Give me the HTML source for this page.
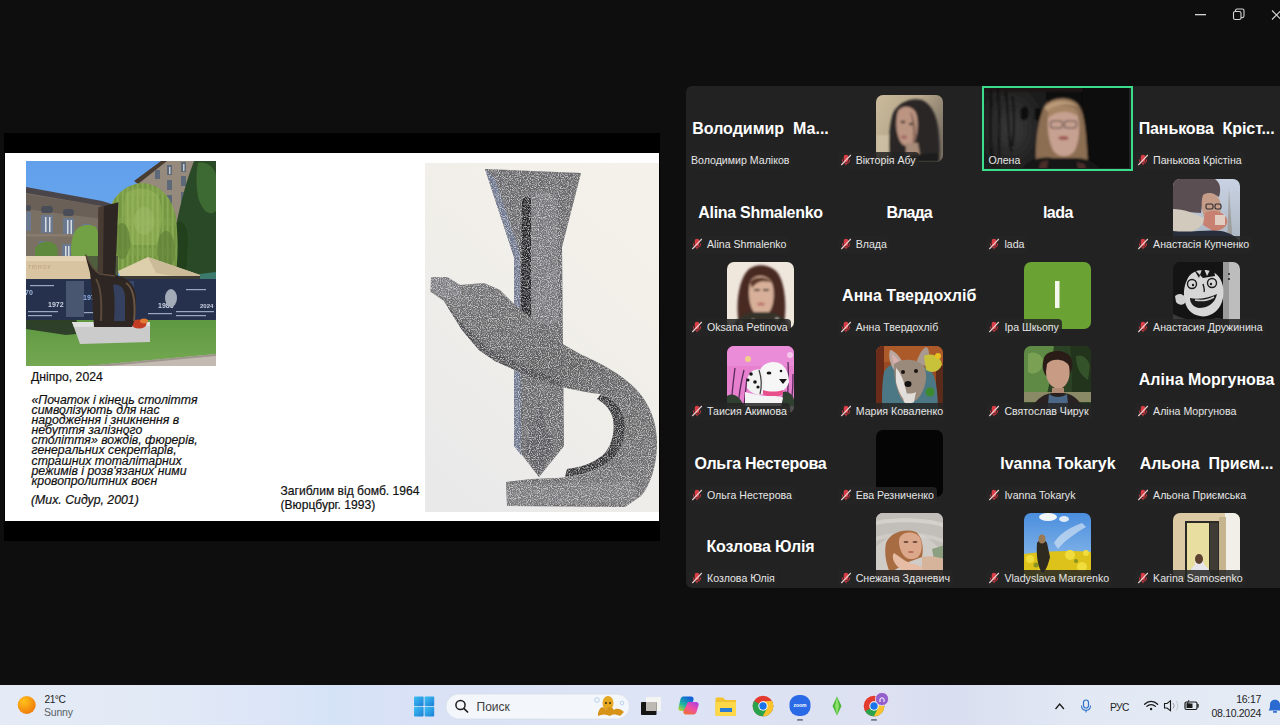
<!DOCTYPE html>
<html><head><meta charset="utf-8">
<style>
*{box-sizing:border-box;margin:0;padding:0}
html,body{width:1280px;height:725px;overflow:hidden;background:#0e0e0e;font-family:"Liberation Sans",sans-serif}
.abs{position:absolute}
#slideframe{position:absolute;left:4px;top:133px;width:656px;height:408px;background:#000}
#slide{position:absolute;left:5px;top:153px;width:654px;height:368px;background:#fff;overflow:hidden}
#panel{position:absolute;left:686px;top:86px;width:610px;height:502px;background:#222222;border-radius:6px}
.tile{position:absolute;width:149px;height:84px}
.big{position:absolute;left:0;right:0;top:34px;text-align:center;color:#fff;font-weight:bold;font-size:16px;line-height:18px;white-space:nowrap}
.av{position:absolute;left:41px;top:9px;width:67px;height:67px;border-radius:7px;overflow:hidden}
.lab{position:absolute;left:3px;top:66px;height:17px;border-radius:4px;background:rgba(36,36,36,0.85);color:#e6e6e6;font-size:10.6px;line-height:17px;white-space:nowrap;padding:0 3px 0 2px}
.vid{position:absolute;left:-1px;top:-0.5px;width:150.6px;height:85.6px;border:2.5px solid #3bdc8c;overflow:hidden}
.vid svg{display:block;width:145px;height:80px}
.vlab{position:absolute;left:3px;top:66px;height:17px;color:#e6e6e6;font-size:10.6px;line-height:17px;white-space:nowrap;padding:0 3px 0 2px}
.lab .mic{display:inline-block;width:12px;height:12px;vertical-align:-2px;margin:0 4px 0 0}
#taskbar{position:absolute;left:0;top:685px;width:1280px;height:40px;background:linear-gradient(90deg,#e4ebf6 0px,#e2eaf6 150px,#dce5f8 280px,#d5e3f7 330px,#d9e1f6 400px,#dde4f5 640px,#dde1f2 880px,#d9def0 950px,#e2e9f4 1080px,#e4ebf5 1280px)}
</style></head><body>

<!-- window controls -->
<svg class="abs" style="left:1180px;top:0" width="100" height="30">
  <rect x="15" y="14" width="11" height="1.3" fill="#d4d4d4"/>
  <g fill="none" stroke="#d4d4d4" stroke-width="1.1">
    <rect x="53.5" y="11.5" width="7.5" height="8" rx="1.6"/>
    <path d="M55.5 11.3 V10.6 a1.6 1.6 0 0 1 1.6 -1.6 H62.4 a1.6 1.6 0 0 1 1.6 1.6 V16 a1.6 1.6 0 0 1 -1.6 1.6 H61.2"/>
    <path d="M92 10.5 L101 19.5 M101 10.5 L92 19.5"/>
  </g>
</svg>

<div id="slideframe"></div>
<div id="slide"><svg class="abs" style="left:21px;top:8px" width="190" height="205" viewBox="0 0 190 205">
<defs>
<linearGradient id="dsky" x1="0" y1="0" x2="0" y2="1"><stop offset="0" stop-color="#62a0ec"/><stop offset="1" stop-color="#7ab2f0"/></linearGradient>
<linearGradient id="dgrass" x1="0" y1="0" x2="0" y2="1"><stop offset="0" stop-color="#5e9840"/><stop offset="1" stop-color="#74a852"/></linearGradient>
<pattern id="willow" width="5" height="30" patternUnits="userSpaceOnUse"><rect width="5" height="30" fill="#7c9e48"/><rect x="1" width="1.5" height="30" fill="#a4c26a" opacity="0.35"/><rect x="3.5" y="5" width="1" height="22" fill="#56772f" opacity="0.35"/></pattern>
<filter id="dbl" x="0" y="0" width="100%" height="100%"><feGaussianBlur stdDeviation="0.6"/></filter>
</defs>
<g filter="url(#dbl)">
<rect width="190" height="205" fill="url(#dsky)"/>
<!-- left building -->
<polygon points="0,27 76,41 92,46 92,100 0,100" fill="#7a6f64"/>
<polygon points="0,33 76,45 92,50 92,60 0,48" fill="#6a6058"/>
<polygon points="0,26 76,40 92,45 92,49 76,45 0,32" fill="#48444a"/>
<g fill="#4a4e58">
<rect x="0" y="44" width="5" height="6" rx="2"/><rect x="15" y="45" width="12" height="7" rx="3"/><rect x="37" y="48" width="11" height="7" rx="3"/>
</g>
<g fill="#6a7890">
<rect x="0" y="51" width="5" height="19"/><rect x="15" y="54" width="12" height="18"/><rect x="37" y="57" width="11" height="17"/><rect x="56" y="63" width="8" height="12"/>
<rect x="13" y="80" width="8" height="9"/><rect x="36" y="83" width="9" height="13"/>
</g>
<g fill="#d8dde4"><rect x="19" y="56" width="1.5" height="15"/><rect x="23" y="56" width="1.5" height="15"/><rect x="41" y="59" width="1.5" height="14"/><rect x="44.5" y="59" width="1.5" height="14"/><rect x="39" y="85" width="1.5" height="10"/><rect x="42" y="85" width="1.5" height="10"/></g>
<rect x="0" y="73" width="92" height="2.5" fill="#887c70"/>
<!-- tall building right -->
<polygon points="111,20 137,0 172,0 172,95 113,95" fill="#958a7c"/>
<polygon points="108,20 135,0 141,0 112,23" fill="#4a3d33"/>
<g fill="#5d6878">
<rect x="129" y="9" width="5" height="9"/><rect x="141" y="4" width="5" height="10"/><rect x="155" y="1" width="5" height="10"/>
<rect x="141" y="19" width="5" height="10"/><rect x="155" y="15" width="5" height="10"/>
<rect x="141" y="34" width="5" height="10"/><rect x="155" y="31" width="5" height="11"/>
</g>
<g fill="#c0c8d0"><rect x="143" y="6" width="1.5" height="7"/><rect x="157" y="3" width="1.5" height="7"/><rect x="157" y="33" width="1.5" height="8"/></g>
<!-- dark trees right -->
<path d="M168 0 H190 V125 H146 C145 100 148 80 151 60 C155 40 161 18 168 0Z" fill="#2c4a26"/>
<path d="M172 2 C180 0 188 6 190 14 V50 C184 56 176 50 172 36 C170 24 170 12 172 2Z" fill="#3d6a31"/>
<path d="M150 62 C156 58 162 64 162 80 L160 118 H146Z" fill="#22401e"/>
<!-- willow -->
<path d="M86 42 C92 30 104 22 118 22 C134 24 146 36 150 56 C152 76 152 96 150 112 H88 C84 90 82 62 86 42Z" fill="url(#willow)"/>
<path d="M100 32 C110 26 122 26 132 34 C138 50 136 68 130 84 H106 C98 66 96 48 100 32Z" fill="#9dbb62" opacity="0.45"/>
<ellipse cx="96" cy="80" rx="8" ry="18" fill="#5d7d36" opacity="0.6"/>
<ellipse cx="140" cy="90" rx="9" ry="20" fill="#5a7a34" opacity="0.55"/>
<ellipse cx="118" cy="60" rx="10" ry="14" fill="#a8c470" opacity="0.35"/>
<path d="M48 72 C52 64 62 62 70 66 C74 74 74 88 72 98 H46 C44 88 45 80 48 72Z" fill="#72a044"/>
<path d="M9 88 C13 80 23 78 30 84 C32 88 32 94 31 98 H9Z" fill="#5e8a3c"/>
<rect x="55" y="95" width="37" height="24" fill="#4f5e3e"/>
<!-- tent left -->
<polygon points="0,95 60,95 72,118 0,118" fill="#d8c4a0"/>
<polygon points="0,95 60,95 62,100 0,100" fill="#e3d3b4"/>
<text x="2" y="108" font-family="Liberation Sans" font-size="5" fill="#b89f7c" letter-spacing="1">ТЮНОУ</text>
<!-- umbrella -->
<polygon points="92,110 122,96 180,116 176,120 94,115" fill="#ddcfac"/>
<polygon points="122,96 180,116 176,120 130,112" fill="#cbbb98"/>
<rect x="94" y="115" width="82" height="4" fill="#3d3a34"/>
<polygon points="174,113 190,111 190,121 174,121" fill="#3a7a6c"/>
<!-- banner -->
<rect x="0" y="118" width="190" height="42" fill="#28324e"/>
<rect x="40" y="120" width="18" height="36" fill="#4a5670"/>
<rect x="70" y="120" width="38" height="10" fill="#39476a"/>
<g fill="#c9d3e3" font-family="Liberation Sans" font-size="7" font-weight="bold">
<text x="-1" y="134" fill="#9fb6da">70</text><text x="22" y="146">1972</text><text x="57" y="139" fill="#8fb0e0">1976</text><text x="132" y="147">1986</text><text x="174" y="147" font-size="6">2024</text>
</g>
<g fill="#9aa8c0"><rect x="2" y="150" width="30" height="1.2"/><rect x="2" y="154" width="24" height="1.2"/><rect x="58" y="151" width="26" height="1.2"/><rect x="122" y="152" width="24" height="1.2"/><rect x="150" y="150" width="38" height="1.2"/><rect x="150" y="154" width="30" height="1.2"/><rect x="4" y="124" width="24" height="1.2"/><rect x="160" y="128" width="20" height="1.2"/></g>
<ellipse cx="145" cy="137" rx="6" ry="9" fill="#a3abb8"/>
<!-- grass -->
<rect x="0" y="159" width="190" height="46" fill="url(#dgrass)"/>
<polygon points="0,159 50,159 60,172 40,174 0,168" fill="#263024" opacity="0.85"/>
<polygon points="60,205 190,193 190,205" fill="#c3bbb1"/>
<polygon points="60,205 190,193 190,195 60,207" fill="#9e968c"/>
<!-- pedestal -->
<polygon points="46,161 124,161 124,181 54,183" fill="#cbcbcb"/>
<polygon points="46,161 124,161 124,165 48,166" fill="#e0e0e0"/>
<!-- flowers -->
<ellipse cx="113" cy="163" rx="7.5" ry="4.5" fill="#c23a22"/>
<ellipse cx="118" cy="160" rx="4" ry="2.5" fill="#e07a30"/>
<!-- sculpture -->
<polygon points="72.7,46.4 92.4,41.2 89.3,114 71.7,114" fill="#2e2520"/>
<polygon points="72.7,46.4 78,45 77,114 71.7,114" fill="#463a32"/>
<path d="M59 92 C62 100 67 108 73 112 L89 114 C98 116 106 120 109 130 C111 140 111 155 106 166 L68 166 C67 150 66 130 64 112 C62 104 60 98 59 92Z" fill="#2f2621"/>
<path d="M87 124 C94 122 99 128 99 136 L99 160 L88 160 C89 146 89 134 87 124Z" fill="#34405e"/>
<path d="M100 122 C107 126 110 140 108 160" fill="none" stroke="#6a5646" stroke-width="2"/>
<path d="M70 118 C74 124 76 140 75 160" fill="none" stroke="#5a4a3e" stroke-width="2"/>
<path d="M60 94 C64 104 68 110 74 113 L89 115" fill="none" stroke="#5c4a3e" stroke-width="1.4"/>
</g>
</svg>
<div class="abs" style="left:26px;top:217px;font-size:12.2px;line-height:14px;color:#111;-webkit-text-stroke:0.2px #111">Дніпро, 2024</div>
<div class="abs" style="left:26.5px;top:242px;font-size:12.3px;line-height:10.1px;font-style:italic;color:#111;white-space:nowrap;-webkit-text-stroke:0.2px #111">«Початок і кінець століття<br>символізують для нас<br>народження і зникнення в<br>небуття залізного<br>століття» вождів, фюрерів,<br>генеральних секретарів,<br>страшних тоталітарних<br>режимів і розв'язаних ними<br>кровопролитних воєн</div>
<div class="abs" style="left:26px;top:340px;font-size:12.3px;line-height:14px;font-style:italic;color:#111;-webkit-text-stroke:0.2px #111">(Мих. Сидур, 2001)</div>
<div class="abs" style="left:275.5px;top:331px;font-size:12.1px;line-height:14px;color:#111;white-space:nowrap;-webkit-text-stroke:0.2px #111">Загиблим від бомб. 1964<br>(Вюрцбург. 1993)</div>
<svg class="abs" style="left:420px;top:10px" width="234" height="349" viewBox="0 0 234 349">
<defs>
<linearGradient id="sbg" x1="0.8" y1="0" x2="0.2" y2="1"><stop offset="0" stop-color="#f4f1ea"/><stop offset="0.5" stop-color="#f0eee9"/><stop offset="1" stop-color="#e9e9ea"/></linearGradient>
<linearGradient id="bandg" x1="0" y1="0" x2="0.3" y2="1"><stop offset="0" stop-color="#747476"/><stop offset="0.5" stop-color="#5c5c5e"/><stop offset="1" stop-color="#6c6c6e"/></linearGradient>
<filter id="speck" x="0" y="0" width="100%" height="100%">
<feTurbulence type="fractalNoise" baseFrequency="1.1" numOctaves="1" seed="7" result="n"/>
<feColorMatrix in="n" type="matrix" values="0 0 0 0 1  0 0 0 0 1  0 0 0 0 1  0 0 0 -3 1.75" result="w"/>
<feComposite in="w" in2="SourceGraphic" operator="in"/>
</filter>
<filter id="speckd" x="0" y="0" width="100%" height="100%">
<feTurbulence type="fractalNoise" baseFrequency="1.0" numOctaves="1" seed="11" result="n"/>
<feColorMatrix in="n" type="matrix" values="0 0 0 0 0.15  0 0 0 0 0.15  0 0 0 0 0.15  0 0 0 -3 1.7" result="w"/>
<feComposite in="w" in2="SourceGraphic" operator="in"/>
</filter>
</defs>
<rect width="234" height="349" fill="url(#sbg)"/>
<g id="sculpt">
<path d="M60 6 L156 10 L137 84 L139 283 L114 314 L90 283 L89 94 Z" fill="#66666a"/>
<path d="M60 6 L89 94 L89 283 L96 292 L95 90 L70 16Z" fill="#6c7690"/>
<path d="M97 38 C99 32 106 32 106 38 L106 160 L96 160Z" fill="#1c1c20"/>
<path d="M106 36 C110 26 128 26 132 38 L134 160 L106 160Z" fill="#76767a"/>
<path d="M100 284 L114 314 L128 286 L114 240Z" fill="#58585c"/>
<path d="M6 114 L22 114 L35 122 L59 120 L75 127 L90 142 L111 159 L136 180 L155 191 C175 200 195 210 211 226 C224 240 232 258 232 280 C232 300 226 322 216 333 L200 344 L82 343 L81 319 L106 316 L132 315 C150 314 172 310 186 298 C198 286 202 270 199 255 C196 244 188 236 176 231 C164 230 150 227 137 224 L111 216 L90 207 L70 198 L54 187 L37 167 L19 138 L6 129 Z" fill="url(#bandg)"/>
<path d="M6 114 L22 114 L35 122 L37 133 L20 135 L5.5 129Z" fill="#7c7c82"/>
<path d="M19 138 C28 150 44 170 70 190 L90 199 L111 208 L137 216 L137 224 L111 216 L90 207 L70 198 L54 187 L37 167Z" fill="#4a4a4e"/>
<path d="M176 231 C188 236 196 244 199 255 C202 270 198 286 186 298 C176 306 160 312 140 314 L142 306 C160 304 172 298 180 290 C188 280 190 266 188 256 C186 248 182 242 172 236Z" fill="#2e2e32"/>
<path d="M82 321 L208 318 L214 330 L208 338 L82 343Z" fill="#78787c"/>
</g>
<g filter="url(#speck)" opacity="0.75"><use href="#sculpt"/></g>
<g filter="url(#speckd)" opacity="0.55"><use href="#sculpt"/></g>
</svg>
</div>

<div id="panel"></div>
<div class="tile" style="left:686.0px;top:86.0px"><div class="big">Володимир&nbsp; Ма...</div><div class="lab">Володимир Маліков</div></div>
<div class="tile" style="left:834.7px;top:86.0px"><div class="av"><svg width="67" height="67" viewBox="0 0 67 67"><defs><linearGradient id="vbg" x1="0" y1="0" x2="1" y2="0.6"><stop offset="0" stop-color="#cbbb9c"/><stop offset="0.5" stop-color="#b8a88c"/><stop offset="1" stop-color="#7a7064"/></linearGradient><filter id="vbl"><feGaussianBlur stdDeviation="1"/></filter></defs>
<rect width="67" height="67" fill="url(#vbg)"/>
<g filter="url(#vbl)">
<rect x="0" y="40" width="20" height="20" fill="#d2c4a8" opacity="0.7"/>
<path d="M14 67 C12 50 13 30 17 18 C22 8 34 2 46 5 C56 9 62 22 63 40 C64 52 64 62 63 67Z" fill="#2a2826"/>
<path d="M22 16 C26 10 36 10 40 18 C43 26 42 40 38 48 C34 53 27 52 24 46 C20 38 19 26 22 16Z" fill="#bc9482"/>
<path d="M34 16 C38 20 40 30 40 40 C40 46 38 50 36 50 C38 40 37 28 34 16Z" fill="#8a6a5c"/>
<ellipse cx="27" cy="27" rx="2.5" ry="1.3" fill="#3a2a24"/><ellipse cx="35" cy="29" rx="2" ry="1.2" fill="#3a2a24"/>
<path d="M30 48 L42 48 L44 60 L30 60Z" fill="#a88a78"/>
<ellipse cx="28" cy="42" rx="3" ry="1.6" fill="#a06060"/>
<path d="M12 67 C16 60 24 58 32 60 L62 58 V67Z" fill="#1e1c1c"/>
</g>
</svg>
</div><div class="lab m"><svg class="mic" viewBox="0 0 12 12" width="12" height="12"><rect x="3.7" y="0.8" width="4.6" height="7.6" rx="2.3" fill="#d83c44"/><path d="M2.3 5.4 v0.4 a3.7 3.7 0 0 0 7.4 0 v-0.4" fill="none" stroke="#c83840" stroke-width="1"/><rect x="5.5" y="9" width="1" height="2.2" fill="#c83840"/><path d="M1.3 11 L10.8 1" stroke="#ecd0d0" stroke-width="1.1"/></svg>Вікторія Абу</div></div>
<div class="tile" style="left:983.4px;top:86.0px"><div class="vid"><svg width="145" height="80" viewBox="1.5 2 145 80"><defs><radialGradient id="olg" cx="0.45" cy="0.5" r="0.6"><stop offset="0" stop-color="#3a3a3a"/><stop offset="1" stop-color="#1a1a1a"/></radialGradient><filter id="oblur" x="-10%" y="-10%" width="120%" height="120%"><feGaussianBlur stdDeviation="1.3"/></filter></defs>
<rect width="149" height="84" fill="#0e0e0e"/>
<g filter="url(#oblur)">
<rect x="0" y="0" width="64" height="84" fill="url(#olg)"/>
<rect x="0" y="0" width="149" height="6" fill="#1a1418"/>
<path d="M100 0 H149 V84 H100Z" fill="#0c0c0c"/>
<g stroke="#111" stroke-width="2" fill="none"><path d="M8 4 C10 30 6 50 10 74"/><path d="M15 2 C19 30 15 50 17 70"/><path d="M23 6 C27 30 25 50 29 66"/><path d="M30 10 C32 24 32 40 30 60"/></g>
<path d="M38 24 C42 18 46 20 46 28 C46 34 40 36 38 32Z" fill="#0c0c0c"/>
<path d="M52 24 C56 20 60 22 60 30 C58 36 54 36 52 32Z" fill="#111"/>
<path d="M54 82 C52 62 55 34 62 20 C68 10 88 9 96 18 C104 30 104 62 106 82Z" fill="#8c6e52"/>
<path d="M62 22 C68 13 88 12 95 21 C90 18 76 16 66 26Z" fill="#b89a78"/>
<path d="M66 28 C70 18 90 18 95 28 C98 40 97 56 92 65 C87 72 76 72 71 65 C66 56 64 40 66 28Z" fill="#c6a090"/>
<path d="M66 24 C72 18 88 18 94 24 L95 30 C86 24 74 24 66 32Z" fill="#a48464"/>
<g fill="none" stroke="#5a4a46" stroke-width="1.1"><rect x="68" y="35" width="12" height="7" rx="2.5"/><rect x="82" y="35" width="12" height="7" rx="2.5"/></g>
<ellipse cx="81" cy="52" rx="5" ry="2" fill="#a05a56"/>
<path d="M40 84 C44 74 58 70 70 72 H92 C104 72 114 76 118 84Z" fill="#161214"/>
<path d="M58 76 L66 74 L64 84 H56Z" fill="#4a2e2c"/>
<path d="M94 76 L102 78 L104 84 H96Z" fill="#4a2e2c"/>
</g>
</svg>
</div><div class="vlab">Олена</div></div>
<div class="tile" style="left:1132.1px;top:86.0px"><div class="big" style="letter-spacing:-0.09px">Панькова&nbsp; Кріст...</div><div class="lab m"><svg class="mic" viewBox="0 0 12 12" width="12" height="12"><rect x="3.7" y="0.8" width="4.6" height="7.6" rx="2.3" fill="#d83c44"/><path d="M2.3 5.4 v0.4 a3.7 3.7 0 0 0 7.4 0 v-0.4" fill="none" stroke="#c83840" stroke-width="1"/><rect x="5.5" y="9" width="1" height="2.2" fill="#c83840"/><path d="M1.3 11 L10.8 1" stroke="#ecd0d0" stroke-width="1.1"/></svg>Панькова Крістіна</div></div>
<div class="tile" style="left:686.0px;top:169.7px"><div class="big" style="letter-spacing:-0.3px">Alina Shmalenko</div><div class="lab m"><svg class="mic" viewBox="0 0 12 12" width="12" height="12"><rect x="3.7" y="0.8" width="4.6" height="7.6" rx="2.3" fill="#d83c44"/><path d="M2.3 5.4 v0.4 a3.7 3.7 0 0 0 7.4 0 v-0.4" fill="none" stroke="#c83840" stroke-width="1"/><rect x="5.5" y="9" width="1" height="2.2" fill="#c83840"/><path d="M1.3 11 L10.8 1" stroke="#ecd0d0" stroke-width="1.1"/></svg>Alina Shmalenko</div></div>
<div class="tile" style="left:834.7px;top:169.7px"><div class="big" style="letter-spacing:-0.9px">Влада</div><div class="lab m"><svg class="mic" viewBox="0 0 12 12" width="12" height="12"><rect x="3.7" y="0.8" width="4.6" height="7.6" rx="2.3" fill="#d83c44"/><path d="M2.3 5.4 v0.4 a3.7 3.7 0 0 0 7.4 0 v-0.4" fill="none" stroke="#c83840" stroke-width="1"/><rect x="5.5" y="9" width="1" height="2.2" fill="#c83840"/><path d="M1.3 11 L10.8 1" stroke="#ecd0d0" stroke-width="1.1"/></svg>Влада</div></div>
<div class="tile" style="left:983.4px;top:169.7px"><div class="big" style="letter-spacing:-0.5px">lada</div><div class="lab m"><svg class="mic" viewBox="0 0 12 12" width="12" height="12"><rect x="3.7" y="0.8" width="4.6" height="7.6" rx="2.3" fill="#d83c44"/><path d="M2.3 5.4 v0.4 a3.7 3.7 0 0 0 7.4 0 v-0.4" fill="none" stroke="#c83840" stroke-width="1"/><rect x="5.5" y="9" width="1" height="2.2" fill="#c83840"/><path d="M1.3 11 L10.8 1" stroke="#ecd0d0" stroke-width="1.1"/></svg>lada</div></div>
<div class="tile" style="left:1132.1px;top:169.7px"><div class="av"><svg width="67" height="67" viewBox="0 0 67 67"><defs><linearGradient id="kbg" x1="0" y1="0" x2="0" y2="1"><stop offset="0" stop-color="#c8d2e2"/><stop offset="1" stop-color="#aab4c0"/></linearGradient></defs>
<rect width="67" height="67" fill="url(#kbg)"/>
<path d="M56 10 L60 67 H54Z" fill="#8a8070" opacity="0.5"/>
<path d="M0 0 H42 C48 4 48 12 46 18 C40 14 34 14 30 18 L28 34 L0 32Z" fill="#5a4e52"/>
<path d="M30 16 C36 12 44 14 47 22 C49 30 47 38 43 42 L32 40 C28 32 28 22 30 16Z" fill="#c49c88"/>
<g fill="none" stroke="#2a2a2e" stroke-width="1.1"><rect x="33" y="25" width="7" height="5" rx="1.5"/><rect x="42" y="25" width="6" height="5" rx="1.5"/></g>
<path d="M0 30 C10 30 22 34 32 40 C28 50 18 56 0 54Z" fill="#d2cbbd"/>
<path d="M32 34 C40 30 50 32 54 40 C56 46 50 52 40 52 L30 46Z" fill="#c88070"/>
<path d="M42 36 H52 V46 H42Z" fill="#e8e0d8" opacity="0.8"/>
<path d="M0 52 C18 54 34 50 48 52 C58 54 64 58 67 64 V67 H0Z" fill="#282e3c"/>
</svg>
</div><div class="lab m"><svg class="mic" viewBox="0 0 12 12" width="12" height="12"><rect x="3.7" y="0.8" width="4.6" height="7.6" rx="2.3" fill="#d83c44"/><path d="M2.3 5.4 v0.4 a3.7 3.7 0 0 0 7.4 0 v-0.4" fill="none" stroke="#c83840" stroke-width="1"/><rect x="5.5" y="9" width="1" height="2.2" fill="#c83840"/><path d="M1.3 11 L10.8 1" stroke="#ecd0d0" stroke-width="1.1"/></svg>Анастасія Купченко</div></div>
<div class="tile" style="left:686.0px;top:253.3px"><div class="av"><svg width="67" height="67" viewBox="0 0 67 67"><defs><filter id="obl"><feGaussianBlur stdDeviation="0.9"/></filter></defs>
<rect width="67" height="67" fill="#efe6dc"/>
<g filter="url(#obl)">
<path d="M12 62 C8 42 12 16 22 7 C30 1 42 2 50 10 C58 20 60 44 57 62Z" fill="#4a2a20"/>
<path d="M23 20 C27 12 41 12 45 21 C48 30 47 42 43 49 C39 55 30 55 26 49 C22 42 21 30 23 20Z" fill="#d8b09a"/>
<path d="M23 20 C28 14 40 14 45 21 C40 18 30 18 25 26Z" fill="#5a3426"/>
<path d="M27 27 H33 V29 H27Z M36 27 H42 V29 H36Z" fill="#3a2620"/>
<ellipse cx="34" cy="42" rx="4" ry="1.6" fill="#b86e68"/>
<path d="M6 67 C8 56 18 50 28 50 H40 C50 50 60 56 62 67Z" fill="#34302c"/>
<g fill="#c8c0b4"><circle cx="14" cy="60" r="1.6"/><circle cx="20" cy="64" r="1.3"/><circle cx="50" cy="57" r="1.6"/><circle cx="56" cy="62" r="1.3"/><circle cx="44" cy="63" r="1.1"/><circle cx="26" cy="58" r="1"/></g>
</g>
</svg>
</div><div class="lab m"><svg class="mic" viewBox="0 0 12 12" width="12" height="12"><rect x="3.7" y="0.8" width="4.6" height="7.6" rx="2.3" fill="#d83c44"/><path d="M2.3 5.4 v0.4 a3.7 3.7 0 0 0 7.4 0 v-0.4" fill="none" stroke="#c83840" stroke-width="1"/><rect x="5.5" y="9" width="1" height="2.2" fill="#c83840"/><path d="M1.3 11 L10.8 1" stroke="#ecd0d0" stroke-width="1.1"/></svg>Oksana Petinova</div></div>
<div class="tile" style="left:834.7px;top:253.3px"><div class="big">Анна Твердохліб</div><div class="lab m"><svg class="mic" viewBox="0 0 12 12" width="12" height="12"><rect x="3.7" y="0.8" width="4.6" height="7.6" rx="2.3" fill="#d83c44"/><path d="M2.3 5.4 v0.4 a3.7 3.7 0 0 0 7.4 0 v-0.4" fill="none" stroke="#c83840" stroke-width="1"/><rect x="5.5" y="9" width="1" height="2.2" fill="#c83840"/><path d="M1.3 11 L10.8 1" stroke="#ecd0d0" stroke-width="1.1"/></svg>Анна Твердохліб</div></div>
<div class="tile" style="left:983.4px;top:253.3px"><div class="av"><svg width="67" height="67" viewBox="0 0 67 67">
<rect width="67" height="67" fill="#6aa234"/>
<rect x="31" y="19" width="4.5" height="27" fill="#f4f7ee"/>
</svg>
</div><div class="lab m"><svg class="mic" viewBox="0 0 12 12" width="12" height="12"><rect x="3.7" y="0.8" width="4.6" height="7.6" rx="2.3" fill="#d83c44"/><path d="M2.3 5.4 v0.4 a3.7 3.7 0 0 0 7.4 0 v-0.4" fill="none" stroke="#c83840" stroke-width="1"/><rect x="5.5" y="9" width="1" height="2.2" fill="#c83840"/><path d="M1.3 11 L10.8 1" stroke="#ecd0d0" stroke-width="1.1"/></svg>Іра Шкьопу</div></div>
<div class="tile" style="left:1132.1px;top:253.3px"><div class="av"><svg width="67" height="67" viewBox="0 0 67 67">
<rect width="67" height="67" fill="#141414"/>
<rect x="52" y="0" width="15" height="67" fill="#bdbdbd"/>
<path d="M50 0 H56 V67 H50Z" fill="#9a9a9a"/>
<path d="M14 18 C18 8 30 6 40 10 C48 14 52 24 50 36 C48 46 42 52 34 54 C24 56 14 50 12 40 C10 32 11 24 14 18Z" fill="#d6d6d6"/>
<path d="M20 6 L26 16 L30 4 L34 14 L40 2 L42 14 L30 16Z" fill="#141414"/>
<path d="M2 34 C6 30 12 32 13 38 C12 44 6 44 3 40Z" fill="#d0d0d0"/>
<g fill="none" stroke="#1a1a1a" stroke-width="1.4"><circle cx="19" cy="22" r="4.5"/><circle cx="39" cy="21" r="4.5"/><path d="M30 22 C31 26 32 28 31 30"/></g>
<circle cx="20" cy="23" r="1.2" fill="#1a1a1a"/><circle cx="38" cy="22" r="1.2" fill="#1a1a1a"/>
<path d="M17 36 C24 38 36 36 44 32 C42 42 34 46 26 46 C20 45 17 41 17 36Z" fill="#1a1a1a"/>
<path d="M22 38 C28 39 36 38 41 35" fill="none" stroke="#cfcfcf" stroke-width="1.6"/>
<path d="M0 52 C10 58 26 60 44 56 L56 58 V67 H0Z" fill="#3a3a3a"/>
<circle cx="56" cy="12" r="1" fill="#222"/><circle cx="56" cy="17" r="1" fill="#222"/>
</svg>
</div><div class="lab m"><svg class="mic" viewBox="0 0 12 12" width="12" height="12"><rect x="3.7" y="0.8" width="4.6" height="7.6" rx="2.3" fill="#d83c44"/><path d="M2.3 5.4 v0.4 a3.7 3.7 0 0 0 7.4 0 v-0.4" fill="none" stroke="#c83840" stroke-width="1"/><rect x="5.5" y="9" width="1" height="2.2" fill="#c83840"/><path d="M1.3 11 L10.8 1" stroke="#ecd0d0" stroke-width="1.1"/></svg>Анастасия Дружинина</div></div>
<div class="tile" style="left:686.0px;top:337.0px"><div class="av"><svg width="67" height="67" viewBox="0 0 67 67">
<rect width="67" height="67" fill="#e680cf"/>
<rect width="67" height="20" fill="#ea8cd8"/>
<g stroke="#5a2a5a" stroke-width="1.3" fill="none"><path d="M4 62 C5 45 7 30 8 22"/><path d="M11 62 C12 48 14 36 17 24"/><path d="M17 60 C18 50 19 40 20 32"/><path d="M60 60 C61 44 62 30 61 16"/><path d="M64 58 C66 46 66 36 66 28"/></g>
<circle cx="21" cy="13" r="3" fill="#f0d08a"/>
<circle cx="63" cy="9" r="3" fill="#f6c6ea"/>
<path d="M0 50 C6 46 12 50 16 58 L14 67 H0Z" fill="#2f4030"/>
<path d="M56 46 C60 44 66 48 67 54 V67 H54Z" fill="#2f4030"/>
<path d="M34 22 C38 16 48 14 54 18 C60 22 62 30 62 36 C60 44 52 48 44 48 L36 48 C32 42 31 30 34 22Z" fill="#f6f6f6"/>
<path d="M20 34 C22 24 30 22 36 24 C38 32 38 42 36 48 C32 50 24 48 20 42Z" fill="#f2f2f2"/>
<path d="M32 24 C34 30 35 40 33 48" fill="none" stroke="#444" stroke-width="1.3"/>
<g fill="#151515"><circle cx="24" cy="28" r="1.8"/><circle cx="21" cy="34" r="1.5"/><circle cx="28" cy="36" r="1.8"/><circle cx="31" cy="41" r="1.6"/><ellipse cx="42" cy="27" rx="2.4" ry="1.6"/><circle cx="54" cy="25" r="1.3"/><path d="M52 33 L60 33 L56 38Z"/></g>
<path d="M36 44 C42 46 50 46 56 44 L56 48 C50 52 42 52 36 48Z" fill="#e8508c"/>
<path d="M18 46 C26 48 34 50 40 50 C48 50 54 50 56 52 L54 60 H18Z" fill="#f4f4f4"/>
<path d="M0 60 H67 V67 H0Z" fill="#4e4e4e"/>
</svg>
</div><div class="lab m"><svg class="mic" viewBox="0 0 12 12" width="12" height="12"><rect x="3.7" y="0.8" width="4.6" height="7.6" rx="2.3" fill="#d83c44"/><path d="M2.3 5.4 v0.4 a3.7 3.7 0 0 0 7.4 0 v-0.4" fill="none" stroke="#c83840" stroke-width="1"/><rect x="5.5" y="9" width="1" height="2.2" fill="#c83840"/><path d="M1.3 11 L10.8 1" stroke="#ecd0d0" stroke-width="1.1"/></svg>Таисия Акимова</div></div>
<div class="tile" style="left:834.7px;top:337.0px"><div class="av"><svg width="67" height="67" viewBox="0 0 67 67">
<rect width="67" height="67" fill="#9a4a22"/>
<rect x="0" y="0" width="67" height="16" fill="#ad5a2a"/>
<rect x="0" y="0" width="8" height="67" fill="#6a2c18"/>
<rect x="60" y="20" width="7" height="47" fill="#5a2a1a"/>
<path d="M8 26 C12 18 20 16 30 18 L52 22 C58 26 62 36 62 67 H6 C6 50 6 36 8 26Z" fill="#4c7886"/>
<path d="M14 4 C18 4 26 12 28 20 L18 24 C14 18 12 10 14 4Z" fill="#b8a8a0"/>
<path d="M16 8 C19 10 23 14 24 19 L19 21 C17 16 16 12 16 8Z" fill="#d8b0b0"/>
<path d="M50 1 C54 2 54 12 50 20 L40 18 C42 10 46 3 50 1Z" fill="#a89a90"/>
<path d="M18 18 C26 12 40 12 48 20 C52 30 50 40 44 50 C40 56 34 58 28 56 C22 50 18 36 18 18Z" fill="#9a8a7c"/>
<path d="M20 22 C26 28 30 40 32 56 C26 54 22 44 20 36Z" fill="#e6e0dc"/>
<path d="M26 46 C30 48 36 48 40 46 L38 56 C34 58 30 58 28 56Z" fill="#e0dcd8"/>
<circle cx="27" cy="26" r="2" fill="#1a1410"/><circle cx="40" cy="25" r="2" fill="#1a1410"/>
<ellipse cx="32" cy="38" rx="3.5" ry="3" fill="#121010"/>
<path d="M48 10 C56 6 64 10 66 18 C64 26 56 28 50 24Z" fill="#c8c23a"/>
<circle cx="62" cy="10" r="3" fill="#e8c020"/>
<circle cx="54" cy="46" r="4.5" fill="#3c8a30"/>
</svg>
</div><div class="lab m"><svg class="mic" viewBox="0 0 12 12" width="12" height="12"><rect x="3.7" y="0.8" width="4.6" height="7.6" rx="2.3" fill="#d83c44"/><path d="M2.3 5.4 v0.4 a3.7 3.7 0 0 0 7.4 0 v-0.4" fill="none" stroke="#c83840" stroke-width="1"/><rect x="5.5" y="9" width="1" height="2.2" fill="#c83840"/><path d="M1.3 11 L10.8 1" stroke="#ecd0d0" stroke-width="1.1"/></svg>Мария Коваленко</div></div>
<div class="tile" style="left:983.4px;top:337.0px"><div class="av"><svg width="67" height="67" viewBox="0 0 67 67"><defs><filter id="mbl"><feGaussianBlur stdDeviation="0.7"/></filter></defs>
<rect width="67" height="67" fill="#2c4224"/>
<g filter="url(#mbl)">
<path d="M-2 -2 H30 C28 20 26 40 22 50 H-2Z" fill="#5e8a44"/>
<path d="M4 8 C10 4 18 8 20 16 C18 26 10 30 4 26Z" fill="#86aa5a" opacity="0.7"/>
<path d="M46 -2 H69 V50 H48 C48 30 48 14 46 -2Z" fill="#22341c"/>
<path d="M52 10 C58 8 64 12 66 20 L64 34 C58 30 52 24 52 10Z" fill="#3a5a2e" opacity="0.8"/>
<path d="M-2 46 H69 V56 H-2Z" fill="#8a8a66"/>
<path d="M20 12 C22 4 40 2 46 10 C50 16 48 24 46 28 L22 30 C18 24 18 18 20 12Z" fill="#2a1e16"/>
<path d="M23 18 C27 12 41 12 45 20 C47 30 44 40 36 43 C28 43 22 36 22 26Z" fill="#c89c84"/>
<path d="M28 42 H40 V48 H28Z" fill="#b08a72"/>
<path d="M6 69 C8 56 18 48 28 47 H40 C50 48 58 56 62 69Z" fill="#2a2420"/>
<path d="M25 48 C30 52 38 52 43 48 L45 69 H23Z" fill="#4c6888"/>
</g>
</svg>
</div><div class="lab m"><svg class="mic" viewBox="0 0 12 12" width="12" height="12"><rect x="3.7" y="0.8" width="4.6" height="7.6" rx="2.3" fill="#d83c44"/><path d="M2.3 5.4 v0.4 a3.7 3.7 0 0 0 7.4 0 v-0.4" fill="none" stroke="#c83840" stroke-width="1"/><rect x="5.5" y="9" width="1" height="2.2" fill="#c83840"/><path d="M1.3 11 L10.8 1" stroke="#ecd0d0" stroke-width="1.1"/></svg>Святослав Чирук</div></div>
<div class="tile" style="left:1132.1px;top:337.0px"><div class="big">Аліна Моргунова</div><div class="lab m"><svg class="mic" viewBox="0 0 12 12" width="12" height="12"><rect x="3.7" y="0.8" width="4.6" height="7.6" rx="2.3" fill="#d83c44"/><path d="M2.3 5.4 v0.4 a3.7 3.7 0 0 0 7.4 0 v-0.4" fill="none" stroke="#c83840" stroke-width="1"/><rect x="5.5" y="9" width="1" height="2.2" fill="#c83840"/><path d="M1.3 11 L10.8 1" stroke="#ecd0d0" stroke-width="1.1"/></svg>Аліна Моргунова</div></div>
<div class="tile" style="left:686.0px;top:420.7px"><div class="big" style="letter-spacing:-0.28px">Ольга Нестерова</div><div class="lab m"><svg class="mic" viewBox="0 0 12 12" width="12" height="12"><rect x="3.7" y="0.8" width="4.6" height="7.6" rx="2.3" fill="#d83c44"/><path d="M2.3 5.4 v0.4 a3.7 3.7 0 0 0 7.4 0 v-0.4" fill="none" stroke="#c83840" stroke-width="1"/><rect x="5.5" y="9" width="1" height="2.2" fill="#c83840"/><path d="M1.3 11 L10.8 1" stroke="#ecd0d0" stroke-width="1.1"/></svg>Ольга Нестерова</div></div>
<div class="tile" style="left:834.7px;top:420.7px"><div class="av"><svg width="67" height="67" viewBox="0 0 67 67"><rect width="67" height="67" fill="#050505"/></svg>
</div><div class="lab m"><svg class="mic" viewBox="0 0 12 12" width="12" height="12"><rect x="3.7" y="0.8" width="4.6" height="7.6" rx="2.3" fill="#d83c44"/><path d="M2.3 5.4 v0.4 a3.7 3.7 0 0 0 7.4 0 v-0.4" fill="none" stroke="#c83840" stroke-width="1"/><rect x="5.5" y="9" width="1" height="2.2" fill="#c83840"/><path d="M1.3 11 L10.8 1" stroke="#ecd0d0" stroke-width="1.1"/></svg>Ева Резниченко</div></div>
<div class="tile" style="left:983.4px;top:420.7px"><div class="big">Ivanna Tokaryk</div><div class="lab m"><svg class="mic" viewBox="0 0 12 12" width="12" height="12"><rect x="3.7" y="0.8" width="4.6" height="7.6" rx="2.3" fill="#d83c44"/><path d="M2.3 5.4 v0.4 a3.7 3.7 0 0 0 7.4 0 v-0.4" fill="none" stroke="#c83840" stroke-width="1"/><rect x="5.5" y="9" width="1" height="2.2" fill="#c83840"/><path d="M1.3 11 L10.8 1" stroke="#ecd0d0" stroke-width="1.1"/></svg>Ivanna Tokaryk</div></div>
<div class="tile" style="left:1132.1px;top:420.7px"><div class="big">Альона&nbsp; Приєм...</div><div class="lab m"><svg class="mic" viewBox="0 0 12 12" width="12" height="12"><rect x="3.7" y="0.8" width="4.6" height="7.6" rx="2.3" fill="#d83c44"/><path d="M2.3 5.4 v0.4 a3.7 3.7 0 0 0 7.4 0 v-0.4" fill="none" stroke="#c83840" stroke-width="1"/><rect x="5.5" y="9" width="1" height="2.2" fill="#c83840"/><path d="M1.3 11 L10.8 1" stroke="#ecd0d0" stroke-width="1.1"/></svg>Альона Приємська</div></div>
<div class="tile" style="left:686.0px;top:504.4px"><div class="big" style="letter-spacing:-0.15px">Козлова Юлія</div><div class="lab m"><svg class="mic" viewBox="0 0 12 12" width="12" height="12"><rect x="3.7" y="0.8" width="4.6" height="7.6" rx="2.3" fill="#d83c44"/><path d="M2.3 5.4 v0.4 a3.7 3.7 0 0 0 7.4 0 v-0.4" fill="none" stroke="#c83840" stroke-width="1"/><rect x="5.5" y="9" width="1" height="2.2" fill="#c83840"/><path d="M1.3 11 L10.8 1" stroke="#ecd0d0" stroke-width="1.1"/></svg>Козлова Юлія</div></div>
<div class="tile" style="left:834.7px;top:504.4px"><div class="av"><svg width="67" height="67" viewBox="0 0 67 67"><defs><filter id="hbl"><feGaussianBlur stdDeviation="0.6"/></filter></defs>
<rect width="67" height="67" fill="#cfcbc6"/>
<g filter="url(#hbl)">
<path d="M-2 -2 H69 V40 C58 30 48 20 34 18 C20 18 8 26 -2 36Z" fill="#c2beb9"/>
<path d="M0 8 C16 4 50 4 67 10 V14 C50 8 16 8 0 12Z" fill="#dcd8d4" opacity="0.7"/>
<path d="M0 24 C14 18 50 18 67 26 V30 C50 22 16 22 0 28Z" fill="#dcd8d4" opacity="0.5"/>
<path d="M56 36 L69 32 V46 L58 46Z" fill="#8aa080"/>
<path d="M10 30 C14 20 28 15 40 19 C46 24 48 34 46 44 L30 50 L14 60 C10 50 8 40 10 30Z" fill="#a86c42"/>
<path d="M24 24 C28 18 40 18 44 25 C47 32 46 40 42 44 C36 48 29 46 26 40 C23 34 22 28 24 24Z" fill="#dca88c"/>
<ellipse cx="30" cy="29" rx="2.5" ry="1" fill="#6a4636"/><ellipse cx="39" cy="29" rx="2.5" ry="1" fill="#6a4636"/>
<ellipse cx="35" cy="39" rx="3" ry="1" fill="#b86a5a"/>
<path d="M18 40 C22 42 28 48 34 50 C40 52 46 52 48 58 C42 60 28 60 22 54 C16 48 16 42 18 40Z" fill="#e6bca4"/>
<path d="M46 44 C54 42 62 44 69 46 V58 H46Z" fill="#d6b49c"/>
<path d="M-2 57 H69 V69 H-2Z" fill="#8a6e60"/>
</g>
</svg>
</div><div class="lab m"><svg class="mic" viewBox="0 0 12 12" width="12" height="12"><rect x="3.7" y="0.8" width="4.6" height="7.6" rx="2.3" fill="#d83c44"/><path d="M2.3 5.4 v0.4 a3.7 3.7 0 0 0 7.4 0 v-0.4" fill="none" stroke="#c83840" stroke-width="1"/><rect x="5.5" y="9" width="1" height="2.2" fill="#c83840"/><path d="M1.3 11 L10.8 1" stroke="#ecd0d0" stroke-width="1.1"/></svg>Снежана Зданевич</div></div>
<div class="tile" style="left:983.4px;top:504.4px"><div class="av"><svg width="67" height="67" viewBox="0 0 67 67"><defs><linearGradient id="fsky" x1="0" y1="0" x2="0" y2="1"><stop offset="0" stop-color="#4a8ede"/><stop offset="1" stop-color="#9cc4ec"/></linearGradient></defs>
<rect width="67" height="67" fill="url(#fsky)"/>
<ellipse cx="24" cy="4" rx="9" ry="4" fill="#f2f6fb"/>
<ellipse cx="40" cy="6" rx="5" ry="3" fill="#dfeaf6"/>
<path d="M30 30 C34 22 46 14 58 10 L62 14 C52 20 40 28 34 36Z" fill="#cfe0f2" opacity="0.7"/>
<path d="M0 41 C20 38 46 37 67 39 V67 H0Z" fill="#dcc21a"/>
<g fill="#f0dc3c"><circle cx="6" cy="46" r="4"/><circle cx="46" cy="42" r="5"/><circle cx="58" cy="54" r="5"/><circle cx="16" cy="60" r="4"/><circle cx="38" cy="62" r="4"/><circle cx="62" cy="40" r="3"/></g>
<g fill="#8a9422"><circle cx="12" cy="52" r="2.5"/><circle cx="52" cy="48" r="2"/><circle cx="28" cy="64" r="2.5"/></g>
<path d="M13 30 C15 26 21 26 23 30 L26 44 C24 52 22 58 18 60 C14 54 12 44 13 30Z" fill="#2f2a20"/>
<ellipse cx="18" cy="26" rx="3.5" ry="4.5" fill="#9a7a52"/>
</svg>
</div><div class="lab m"><svg class="mic" viewBox="0 0 12 12" width="12" height="12"><rect x="3.7" y="0.8" width="4.6" height="7.6" rx="2.3" fill="#d83c44"/><path d="M2.3 5.4 v0.4 a3.7 3.7 0 0 0 7.4 0 v-0.4" fill="none" stroke="#c83840" stroke-width="1"/><rect x="5.5" y="9" width="1" height="2.2" fill="#c83840"/><path d="M1.3 11 L10.8 1" stroke="#ecd0d0" stroke-width="1.1"/></svg>Vladyslava Mararenko</div></div>
<div class="tile" style="left:1132.1px;top:504.4px"><div class="av"><svg width="67" height="67" viewBox="0 0 67 67">
<rect width="67" height="67" fill="#dccaa4"/>
<rect x="52" y="0" width="15" height="67" fill="#f2efe8"/>
<rect x="46" y="4" width="7" height="63" fill="#c6b48e"/>
<rect x="12" y="8" width="34" height="59" fill="#2c2a24"/>
<rect x="14" y="10" width="22" height="57" fill="#e8dea0"/>
<rect x="37" y="10" width="8" height="57" fill="#3e3c34"/>
<path d="M22 46 C22 40 30 40 30 46 L31 52 C35 54 38 58 38 67 H16 C16 58 19 54 22 52Z" fill="#e6e6ea"/>
<ellipse cx="26" cy="46" rx="4" ry="5" fill="#5e4230"/>
</svg>
</div><div class="lab m"><svg class="mic" viewBox="0 0 12 12" width="12" height="12"><rect x="3.7" y="0.8" width="4.6" height="7.6" rx="2.3" fill="#d83c44"/><path d="M2.3 5.4 v0.4 a3.7 3.7 0 0 0 7.4 0 v-0.4" fill="none" stroke="#c83840" stroke-width="1"/><rect x="5.5" y="9" width="1" height="2.2" fill="#c83840"/><path d="M1.3 11 L10.8 1" stroke="#ecd0d0" stroke-width="1.1"/></svg>Karina Samosenko</div></div>

<div id="taskbar"><svg class="abs" style="left:0;top:0" width="1280" height="40" viewBox="0 685 1280 40">
<defs>
<radialGradient id="sun" cx="0.35" cy="0.3" r="0.75"><stop offset="0" stop-color="#ffc21a"/><stop offset="1" stop-color="#f07a0a"/></radialGradient>
<linearGradient id="winl" x1="0" y1="0" x2="1" y2="1"><stop offset="0" stop-color="#3fc0f5"/><stop offset="1" stop-color="#1a7fd6"/></linearGradient>
<linearGradient id="cop" x1="0" y1="0" x2="1" y2="1"><stop offset="0" stop-color="#3aa0f0"/><stop offset="0.5" stop-color="#c46ad8"/><stop offset="1" stop-color="#f08040"/></linearGradient>
</defs>
<!-- weather -->
<circle cx="26.7" cy="705" r="9" fill="url(#sun)"/>
<!-- windows logo -->
<g fill="url(#winl)"><rect x="414" y="696.5" width="9.6" height="9.6" rx="0.8"/><rect x="424.6" y="696.5" width="9.6" height="9.6" rx="0.8"/><rect x="414" y="706.8" width="9.6" height="9.6" rx="0.8"/><rect x="424.6" y="706.8" width="9.6" height="9.6" rx="0.8"/></g>
<!-- search box -->
<rect x="446" y="694" width="183.5" height="25" rx="12.5" fill="#f3f6fb" stroke="#d4dae4" stroke-width="0.6"/>
<circle cx="460.5" cy="705" r="4.6" fill="none" stroke="#1e1e1e" stroke-width="1.5"/>
<path d="M463.8 708.3 L467.6 712" stroke="#1e1e1e" stroke-width="1.7" stroke-linecap="round"/>
<!-- octopus -->
<g>
<circle cx="597" cy="700" r="2.3" fill="none" stroke="#a9c9e8" stroke-width="0.8"/>
<circle cx="622" cy="703" r="1.8" fill="none" stroke="#a9c9e8" stroke-width="0.8"/>
<ellipse cx="608" cy="703" rx="5.5" ry="7" fill="#e5a820"/>
<path d="M598 713 C600 706 604 706 606 710 C608 706 612 706 614 710 C616 708 620 708 624 712 L620 716 C616 714 612 714 610 716 C606 714 602 714 598 716Z" fill="#d79218"/>
<circle cx="606" cy="703" r="1" fill="#3a2a10"/><circle cx="610" cy="703" r="1" fill="#3a2a10"/>
</g>
<!-- task view -->
<rect x="646" y="697" width="15" height="14" fill="#f4f4f2"/>
<rect x="641" y="702" width="15.5" height="13" rx="0.8" fill="#151515"/>
<rect x="646" y="702" width="10.5" height="9" fill="#bdbab6"/>
<!-- copilot -->
<defs>
<linearGradient id="copa" x1="0" y1="1" x2="0.6" y2="0"><stop offset="0" stop-color="#d8d820"/><stop offset="0.45" stop-color="#20b8a0"/><stop offset="1" stop-color="#1060d8"/></linearGradient>
<linearGradient id="copb" x1="0.8" y1="0" x2="0.2" y2="1"><stop offset="0" stop-color="#b040e0"/><stop offset="0.5" stop-color="#f050a0"/><stop offset="1" stop-color="#f07030"/></linearGradient>
</defs>
<path d="M683 696.5 H691 C693 696.5 694 698 693.5 700 L690 709 C689.5 710.5 688.5 711 687 711 H681 C679 711 678 709.5 678.5 707.5 L680.5 699 C681 697.5 682 696.5 683 696.5Z" fill="url(#copa)"/>
<path d="M688 702 H696 C698 702 699 703.5 698.5 705.5 L696.5 712 C696 713.5 695 714.5 693.5 714.5 H686 C684 714.5 683 713 683.5 711Z" fill="url(#copb)"/>
<!-- explorer -->
<path d="M715.5 699 C715.5 698 716 697.5 717 697.5 H723 L725.5 700 H735 C735.7 700 736 700.4 736 701 V715 C736 715.5 735.6 716 735 716 H716.5 C716 716 715.5 715.5 715.5 715Z" fill="#f2c231"/>
<rect x="715.5" y="702" width="20.5" height="14" rx="1" fill="#ffd84a"/>
<rect x="720" y="708" width="12" height="4" fill="#2c7bd4"/>
<!-- chrome -->
<g transform="translate(763 706)">
<circle r="10.3" fill="#e33b2e"/>
<path d="M0 0 L-8.92 -5.15 A10.3 10.3 0 0 0 -5.15 8.92Z" fill="#2ba24c"/>
<path d="M0 0 L-8.92 5.15 A10.3 10.3 0 0 0 10.3 0 L8.92 -5.15Z" fill="#2ba24c"/>
<path d="M0 -4.6 L8.92 -5.15 A10.3 10.3 0 0 1 -0.2 10.3 L4 2.3Z" fill="#fbc22c"/>
<circle r="4.7" fill="#fff"/><circle r="3.7" fill="#1a73e8"/>
</g>
<!-- zoom -->
<rect x="789.5" y="695" width="21" height="21" rx="9" fill="#2b6ae6"/>
<text x="800" y="707.3" font-family="Liberation Sans" font-size="5" font-weight="bold" fill="#fff" text-anchor="middle">zoom</text>
<rect x="797" y="719" width="6" height="1.8" rx="0.9" fill="#707888"/>
<!-- sims plumbob -->
<path d="M837 696.5 L841.5 706 L837 715.5 L832.5 706Z" fill="#49b83a"/>
<path d="M837 696.5 L839 706 L837 715.5 L835 706Z" fill="#8ee06a"/>
<!-- chrome profile -->
<g transform="translate(874 706)">
<circle r="10.3" fill="#e33b2e"/>
<path d="M0 0 L-8.92 5.15 A10.3 10.3 0 0 0 10.3 0 L8.92 -5.15Z" fill="#2ba24c"/>
<path d="M0 -4.6 L8.92 -5.15 A10.3 10.3 0 0 1 -0.2 10.3 L4 2.3Z" fill="#fbc22c"/>
<circle r="4.7" fill="#fff"/><circle r="3.7" fill="#1a73e8"/>
</g>
<circle cx="882" cy="699" r="6.6" fill="#9460cc" stroke="#ece4f6" stroke-width="0.8"/>
<path d="M880 702 V699 C880 697.5 884 697.5 884 699 V702" fill="none" stroke="#fff" stroke-width="1"/>
<rect x="871" y="719" width="6" height="1.8" rx="0.9" fill="#707888"/>
<!-- tray -->
<path d="M1055.5 709 L1059.7 704 L1063.9 709" fill="none" stroke="#1a1a1a" stroke-width="1.3"/>
<rect x="1083.5" y="700" width="5" height="8" rx="2.5" fill="none" stroke="#2f72c8" stroke-width="1.2"/>
<path d="M1081.5 705.5 C1081.5 712 1090.5 712 1090.5 705.5 M1086 710 V712.5" fill="none" stroke="#2f72c8" stroke-width="1.1"/>
<g fill="none" stroke="#1a1a1a" stroke-width="1.3" stroke-linecap="round">
<path d="M1144.6 704.2 A9 9 0 0 1 1157.6 704.2"/>
<path d="M1146.8 706.4 A6 6 0 0 1 1155.4 706.4"/>
</g>
<circle cx="1151.1" cy="709" r="1.2" fill="#1a1a1a"/>
<path d="M1164.5 703.5 H1167 L1170.5 700.8 V710.7 L1167 708 H1164.5Z" fill="none" stroke="#1a1a1a" stroke-width="1.1"/>
<path d="M1173 703 A4 4 0 0 1 1173 708.5" fill="none" stroke="#9a9a9a" stroke-width="1"/>
<path d="M1176 701 A7 7 0 0 1 1176 710.5" fill="none" stroke="#c8c8c8" stroke-width="1"/>
<rect x="1185" y="702" width="12" height="7.5" rx="1.5" fill="none" stroke="#1a1a1a" stroke-width="1.2"/>
<rect x="1197.4" y="704" width="1.3" height="3.5" fill="#1a1a1a"/>
<rect x="1186.5" y="703.5" width="6" height="4.5" fill="#1a1a1a"/>
<path d="M1189 700 L1187 704 H1190 L1188 708" fill="none" stroke="#1a1a1a" stroke-width="0.9"/>
<path d="M1268.5 710.5 C1270 709 1270 706 1270 704.5 C1270 701.5 1272.3 699.8 1275 699.8 C1277.7 699.8 1280 701.5 1280 704.5 V710.5Z" fill="#2b6ad0"/>
<rect x="1273" y="711" width="4" height="1.8" rx="0.9" fill="#2b6ad0"/>
</svg>
<div class="abs" style="left:44.5px;top:8px;font-size:10.2px;line-height:13px;color:#1e1e1e;letter-spacing:-0.5px">21°C</div>
<div class="abs" style="left:44px;top:21px;font-size:10.5px;line-height:13px;color:#5a5f66;letter-spacing:-0.2px">Sunny</div>
<div class="abs" style="left:476.5px;top:15px;font-size:12px;line-height:14px;color:#3c3c3c">Поиск</div>
<div class="abs" style="left:1110px;top:16px;font-size:10.3px;line-height:13px;color:#1e1e1e;letter-spacing:-0.6px">РУС</div>
<div class="abs" style="left:1205px;top:8px;width:56px;text-align:right;font-size:10.5px;line-height:13.5px;color:#1e1e1e;letter-spacing:-0.3px">16:17<br>08.10.2024</div>
</div>

</body></html>
